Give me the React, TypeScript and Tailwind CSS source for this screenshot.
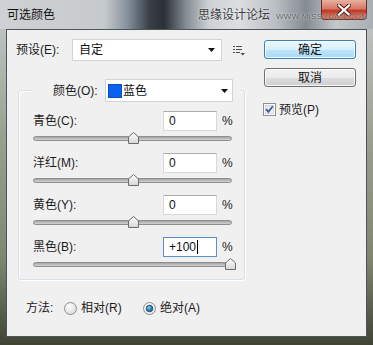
import React from 'react';

const FONT = "font-['Liberation_Sans','Noto_Sans_CJK_SC',sans-serif]";

const Arrow = () => (
  <svg width="7" height="4" viewBox="0 0 7 4">
    <path d="M0 0 H7 L3.5 4 Z" fill="#111" />
  </svg>
);

const Slider: React.FC<{ thumb: string }> = ({ thumb }) => (
  <div className="relative h-[12px] w-[199px] mt-[1px] pt-[4px]">
    <div className="h-[5px] w-full rounded-full border border-[#8e8e8e] bg-[linear-gradient(#a4a4a4,#d2d2d2)]" />
    <svg className={`absolute top-0 ${thumb}`} width="11" height="12" viewBox="0 0 11 12">
      <defs>
        <linearGradient id="th" x1="0" y1="0" x2="0" y2="1">
          <stop offset="0" stopColor="#ffffff" />
          <stop offset="1" stopColor="#d6d6d6" />
        </linearGradient>
      </defs>
      <path d="M5.5 0.5 L10.5 5 V11.5 H0.5 V5 Z" fill="url(#th)" stroke="#6c6c6c" />
    </svg>
  </div>
);

const Row: React.FC<{ label: string; value: string; thumb: string; focused?: boolean; last?: boolean }> = ({
  label,
  value,
  thumb,
  focused,
  last
}) => (
  <div className={last ? '' : 'mb-[9px]'}>
    <div className="flex items-center h-[20px]">
      <span className="w-[130px] text-[12px] leading-none text-[#1b1b1b]">{label}</span>
      <div
        className={`w-[54px] h-[20px] bg-white border flex items-center pl-[5px] text-[12px] text-[#111] ${
          focused ? 'border-[#5b8fc7]' : 'border-[#d4d9de] border-t-[#abadb3]'
        }`}
      >
        {value}
        {focused && <span className="w-px h-[14px] bg-black ml-[1px]" />}
      </div>
      <span className="ml-[5px] text-[12px] text-[#222]">%</span>
    </div>
    <Slider thumb={thumb} />
  </div>
);

const Radio: React.FC<{ checked?: boolean }> = ({ checked }) => (
  <svg width="13" height="13" viewBox="0 0 13 13">
    <defs>
      <radialGradient id={checked ? 'rOn' : 'rOff'} cx="0.4" cy="0.35" r="0.7">
        <stop offset="0" stopColor="#ffffff" />
        <stop offset="1" stopColor={checked ? '#dfe6ea' : '#d8d8d8'} />
      </radialGradient>
      <radialGradient id="dot" cx="0.4" cy="0.35" r="0.7">
        <stop offset="0" stopColor="#7fd0f2" />
        <stop offset="0.6" stopColor="#2a7fb2" />
        <stop offset="1" stopColor="#1a4f72" />
      </radialGradient>
    </defs>
    <circle cx="6.5" cy="6.5" r="6" fill={`url(#${checked ? 'rOn' : 'rOff'})`} stroke="#8e8f8f" />
    {checked && <circle cx="6.5" cy="6.5" r="3.3" fill="url(#dot)" stroke="#22475f" strokeWidth="0.8" />}
  </svg>
);

const WinButton: React.FC<{ children: React.ReactNode; primary?: boolean; className?: string }> = ({
  children,
  primary,
  className
}) => (
  <div
    className={`w-[92px] h-[19px] rounded-[3px] border flex items-center justify-center text-[12px] text-[#111] shadow-[inset_0_0_0_1px_rgba(255,255,255,0.8)] ${
      primary
        ? 'border-[#3c7fb1] bg-[linear-gradient(#eaf6fd_0%,#d9f0fc_50%,#bee6fd_51%,#a7d9f5_100%)]'
        : 'border-[#707070] bg-[linear-gradient(#f2f2f2_0%,#ebebeb_50%,#dddddd_51%,#cfcfcf_100%)]'
    } ${className ?? ''}`}
  >
    {children}
  </div>
);

export default function App() {
  return (
    <div
      className={`w-[373px] h-[345px] flex flex-col overflow-hidden ${FONT} bg-[linear-gradient(180deg,#c6cacd_0%,#9aa08f_40%,#7e8670_75%,#3f4434_100%)]`}
    >
      {/* title bar */}
      <div className="relative h-[29px] flex items-start bg-[linear-gradient(90deg,#cfd2d5_0%,#c6cacd_28%,#8893a0_34%,#3a4048_40%,#2b3036_44%,#858d95_50%,#cdd1d4_56%,#dcdfe1_64%,#b9bec3_74%,#848b92_82%,#c3c7ca_90%,#a8aeb3_100%)]">
        <span className="ml-[7px] mt-[7px] text-[12px] leading-[14px] text-[#111] font-['Noto_Sans_CJK_SC',sans-serif]">
          可选颜色
        </span>
        <span className="ml-[143px] mt-[7px] text-[12px] leading-[14px] text-[#3c3c3c] font-['Noto_Sans_CJK_SC',sans-serif] [text-shadow:0_0_2px_#fff]">
          思缘设计论坛
        </span>
        {/* close button */}
        <div className="absolute top-0 right-[6px] w-[46px] h-[20px] rounded-b-[4px] border border-t-0 border-[#6a2a22] bg-[linear-gradient(#e7b0a2_0%,#d77a66_45%,#c23b28_55%,#d9664a_100%)] flex items-center justify-center">
          <svg width="14" height="12" viewBox="0 0 14 12">
            <path d="M2 1.5 L12 10.5 M12 1.5 L2 10.5" stroke="#4a1a14" strokeWidth="4" strokeLinecap="square" />
            <path d="M2 1.5 L12 10.5 M12 1.5 L2 10.5" stroke="#fff" strokeWidth="2.2" strokeLinecap="square" />
          </svg>
        </div>
        <span className="absolute z-10 top-[12px] left-[276px] text-[8px] leading-[9px] tracking-[0.3px] text-[#5a5a5a] [text-shadow:0_0_2px_#fff]">
          WWW.MISSYUAN.COM
        </span>
      </div>

      {/* client area */}
      <div className="mx-[6px] h-[308px] border border-[#4b555c] bg-[#f0f0f0] flex">
        {/* left column */}
        <div className="w-[245px] pl-[9px] pt-[9px]">
          <div className="flex items-center h-[22px]">
            <span className="w-[56px] text-[12px] text-[#1b1b1b]">预设(E):</span>
            <div className="w-[150px] h-[22px] bg-white border border-[#cfd4d9] flex items-center pl-[6px] pr-[6px] text-[12px] text-[#111]">
              <span className="flex-1">自定</span>
              <Arrow />
            </div>
            <svg className="ml-[11px]" width="12" height="11" viewBox="0 0 12 11">
              <path d="M0 1.5 H2 M3 1.5 H9 M0 4.5 H2 M3 4.5 H9 M0 7.5 H2 M3 7.5 H7" stroke="#4d4d4d" />
              <path d="M7.5 8 H12 L9.75 10.5 Z" fill="#4d4d4d" />
            </svg>
          </div>

          <fieldset className="mt-[18px] ml-[2px] w-[227px] border border-[#d5dfe5] rounded-[3px] shadow-[inset_1px_1px_0_#fff,1px_1px_0_#fff] pl-[14px] pb-[9px]">
            <legend className="ml-[-1px] px-0">
              <div className="flex items-center h-[23px] w-[208px] bg-[#f0f0f0] pl-[21px]">
                <span className="w-[52px] text-[12px] text-[#1b1b1b]">颜色(O):</span>
                <div className="w-[128px] h-[23px] bg-white border border-[#cfd4d9] flex items-center pl-[2px] pr-[4px] text-[12px] text-[#111]">
                  <span className="w-[14px] h-[14px] bg-[#0a62ee] border border-[#0a4fc0] mr-[1px]" />
                  <span className="flex-1">蓝色</span>
                  <Arrow />
                </div>
              </div>
            </legend>
            <div className="pt-[9px]">
              <Row label="青色(C):" value="0" thumb="left-[95px]" />
              <Row label="洋红(M):" value="0" thumb="left-[95px]" />
              <Row label="黄色(Y):" value="0" thumb="left-[95px]" />
              <Row label="黑色(B):" value="+100" thumb="left-[192px]" focused last />
            </div>
          </fieldset>

          <div className="mt-[20px] ml-[10px] flex items-center h-[16px] text-[12px] text-[#1b1b1b]">
            <span className="w-[38px]">方法:</span>
            <Radio />
            <span className="ml-[4px] w-[62px]">相对(R)</span>
            <Radio checked />
            <span className="ml-[4px]">绝对(A)</span>
          </div>
        </div>

        {/* right column */}
        <div className="pl-[12px] pt-[10px] flex flex-col">
          <WinButton primary>确定</WinButton>
          <WinButton className="mt-[9px]">取消</WinButton>
          <div className="mt-[16px] flex items-center h-[13px] text-[12px] text-[#1b1b1b]">
            <svg className="-ml-[1px]" width="13" height="13" viewBox="0 0 13 13">
              <defs>
                <linearGradient id="cb" x1="0" y1="0" x2="1" y2="1">
                  <stop offset="0" stopColor="#dde4ee" />
                  <stop offset="1" stopColor="#f7f9fb" />
                </linearGradient>
              </defs>
              <rect x="0.5" y="0.5" width="12" height="12" fill="#fff" stroke="#8e8f8f" />
              <rect x="2.5" y="2.5" width="8" height="8" fill="url(#cb)" stroke="#b4bcc8" strokeWidth="0.6" />
              <path d="M3.2 6.2 L5.4 8.8 L9.8 3.2" fill="none" stroke="#3a5a98" strokeWidth="1.8" />
            </svg>
            <span className="ml-[3px]">预览(P)</span>
          </div>
        </div>
      </div>
    </div>
  );
}
